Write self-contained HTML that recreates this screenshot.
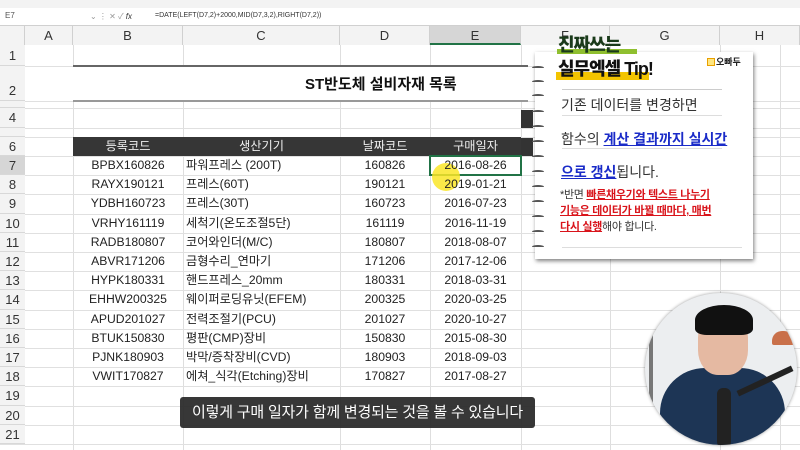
<!DOCTYPE html><html><head><meta charset="utf-8"><style>
*{margin:0;padding:0;box-sizing:border-box}
body{width:800px;height:450px;overflow:hidden;background:#fff;font-family:"Liberation Sans","Noto Sans CJK KR",sans-serif;position:relative;color:#222}
.a{position:absolute}
.vl{position:absolute;top:26px;bottom:0;width:1px;background:#dedede}
.hl{position:absolute;left:0;right:0;height:1px;background:#e0e0e0}
.rh{position:absolute;left:0;width:25px;background:#f3f3f3;font-size:13px;text-align:center;color:#333;border-bottom:1px solid #d8d8d8}
.ch{position:absolute;top:26px;height:19px;background:#f3f3f3;font-size:13px;text-align:center;line-height:19px;color:#333;border-right:1px solid #d0d0d0}
.c{position:absolute;font-size:12.2px;line-height:19px;white-space:nowrap;color:#222}
.ring{position:absolute;left:532px;width:12px;height:3px;border-top:2px solid #555;border-radius:50%}
</style></head><body>
<div class="a" style="left:0;top:0;width:800px;height:8px;background:#f3f3f3"></div>
<div class="a" style="left:0;top:8px;width:800px;height:18px;background:#fff;border-bottom:1px solid #d0d0d0"></div>
<div class="a" style="left:5px;top:11px;font-size:8px;color:#555">E7</div>
<div class="a" style="left:90px;top:11px;font-size:8px;color:#999">⌄ ⋮ ✕ ✓ <i style="color:#333">fx</i></div>
<div class="a" style="left:155px;top:12px;font-size:7px;color:#333">=DATE(LEFT(D7,2)+2000,MID(D7,3,2),RIGHT(D7,2))</div>
<div class="ch" style="left:0;width:25px"></div>
<div class="ch" style="left:25px;width:48px">A</div>
<div class="ch" style="left:73px;width:110px">B</div>
<div class="ch" style="left:183px;width:157px">C</div>
<div class="ch" style="left:340px;width:90px">D</div>
<div class="ch" style="left:430px;width:91px;background:#d6d6d6;border-bottom:2px solid #217346">E</div>
<div class="ch" style="left:521px;width:89px">F</div>
<div class="ch" style="left:610px;width:110px">G</div>
<div class="ch" style="left:720px;width:80px">H</div>
<div class="vl" style="left:73px;top:45px"></div><div class="vl" style="left:183px;top:45px"></div><div class="vl" style="left:340px;top:45px"></div><div class="vl" style="left:430px;top:45px"></div><div class="vl" style="left:521px;top:45px"></div><div class="vl" style="left:610px;top:45px"></div><div class="vl" style="left:720px;top:45px"></div><div class="vl" style="left:780px;top:45px"></div>
<div class="hl" style="top:66px"></div><div class="hl" style="top:101px"></div><div class="hl" style="top:108px"></div><div class="hl" style="top:128px"></div><div class="hl" style="top:137px"></div><div class="hl" style="top:156px"></div>
<div class="hl" style="top:175px"></div><div class="hl" style="top:194px"></div><div class="hl" style="top:214px"></div><div class="hl" style="top:233px"></div><div class="hl" style="top:252px"></div><div class="hl" style="top:271px"></div><div class="hl" style="top:290px"></div><div class="hl" style="top:310px"></div><div class="hl" style="top:329px"></div><div class="hl" style="top:348px"></div><div class="hl" style="top:367px"></div><div class="hl" style="top:386px"></div><div class="hl" style="top:406px"></div><div class="hl" style="top:425px"></div><div class="hl" style="top:444px"></div>
<div class="rh" style="top:45px;height:21px;line-height:21px">1</div>
<div class="rh" style="top:66px;height:35px;line-height:50px">2</div>
<div class="rh" style="top:101px;height:7px"></div>
<div class="rh" style="top:108px;height:20px;line-height:20px">4</div>
<div class="rh" style="top:128px;height:9px"></div>
<div class="rh" style="top:137px;height:19px;line-height:19px">6</div>
<div class="rh" style="top:156px;height:19px;line-height:19px;background:#d6d6d6">7</div>
<div class="rh" style="top:175px;height:19px;line-height:19px">8</div>
<div class="rh" style="top:194px;height:20px;line-height:20px">9</div>
<div class="rh" style="top:214px;height:19px;line-height:19px">10</div>
<div class="rh" style="top:233px;height:19px;line-height:19px">11</div>
<div class="rh" style="top:252px;height:19px;line-height:19px">12</div>
<div class="rh" style="top:271px;height:19px;line-height:19px">13</div>
<div class="rh" style="top:290px;height:20px;line-height:20px">14</div>
<div class="rh" style="top:310px;height:19px;line-height:19px">15</div>
<div class="rh" style="top:329px;height:19px;line-height:19px">16</div>
<div class="rh" style="top:348px;height:19px;line-height:19px">17</div>
<div class="rh" style="top:367px;height:19px;line-height:19px">18</div>
<div class="rh" style="top:386px;height:20px;line-height:20px">19</div>
<div class="rh" style="top:406px;height:19px;line-height:19px">20</div>
<div class="rh" style="top:425px;height:19px;line-height:19px">21</div>
<div class="a" style="left:73px;top:65px;width:455px;height:2px;background:#666"></div>
<div class="a" style="left:73px;top:100px;width:455px;height:2px;background:#999"></div>
<div class="a" style="left:73px;top:67px;width:455px;height:33px;background:#fff"></div>
<div class="a" style="left:305px;top:73px;font-size:15px;font-weight:bold;color:#111">ST반도체 설비자재 목록</div>
<div class="a" style="left:521px;top:110px;width:12px;height:18px;background:#333"></div>
<div class="a" style="left:521px;top:138px;width:12px;height:18px;background:#333"></div>
<div class="a" style="left:73px;top:137px;width:448px;height:19px;background:#363636"></div>
<div class="c" style="left:73px;top:137px;width:110px;text-align:center;color:#eee">등록코드</div>
<div class="c" style="left:183px;top:137px;width:157px;text-align:center;color:#eee">생산기기</div>
<div class="c" style="left:340px;top:137px;width:90px;text-align:center;color:#eee">날짜코드</div>
<div class="c" style="left:430px;top:137px;width:91px;text-align:center;color:#eee">구매일자</div>
<div class="a" style="left:429px;top:155px;width:93px;height:21px;border:2px solid #217346"></div>
<div class="a" style="left:432px;top:163px;width:28px;height:28px;border-radius:50%;background:rgba(250,230,40,.85)"></div>
<div class="c" style="left:73px;top:156px;width:110px;text-align:center">BPBX160826</div><div class="c" style="left:186px;top:156px">파워프레스 (200T)</div><div class="c" style="left:340px;top:156px;width:90px;text-align:center">160826</div><div class="c" style="left:430px;top:156px;width:91px;text-align:center">2016-08-26</div>
<div class="c" style="left:73px;top:175px;width:110px;text-align:center">RAYX190121</div><div class="c" style="left:186px;top:175px">프레스(60T)</div><div class="c" style="left:340px;top:175px;width:90px;text-align:center">190121</div><div class="c" style="left:430px;top:175px;width:91px;text-align:center">2019-01-21</div>
<div class="c" style="left:73px;top:194px;width:110px;text-align:center">YDBH160723</div><div class="c" style="left:186px;top:194px">프레스(30T)</div><div class="c" style="left:340px;top:194px;width:90px;text-align:center">160723</div><div class="c" style="left:430px;top:194px;width:91px;text-align:center">2016-07-23</div>
<div class="c" style="left:73px;top:214px;width:110px;text-align:center">VRHY161119</div><div class="c" style="left:186px;top:214px">세척기(온도조절5단)</div><div class="c" style="left:340px;top:214px;width:90px;text-align:center">161119</div><div class="c" style="left:430px;top:214px;width:91px;text-align:center">2016-11-19</div>
<div class="c" style="left:73px;top:233px;width:110px;text-align:center">RADB180807</div><div class="c" style="left:186px;top:233px">코어와인더(M/C)</div><div class="c" style="left:340px;top:233px;width:90px;text-align:center">180807</div><div class="c" style="left:430px;top:233px;width:91px;text-align:center">2018-08-07</div>
<div class="c" style="left:73px;top:252px;width:110px;text-align:center">ABVR171206</div><div class="c" style="left:186px;top:252px">금형수리_연마기</div><div class="c" style="left:340px;top:252px;width:90px;text-align:center">171206</div><div class="c" style="left:430px;top:252px;width:91px;text-align:center">2017-12-06</div>
<div class="c" style="left:73px;top:271px;width:110px;text-align:center">HYPK180331</div><div class="c" style="left:186px;top:271px">핸드프레스_20mm</div><div class="c" style="left:340px;top:271px;width:90px;text-align:center">180331</div><div class="c" style="left:430px;top:271px;width:91px;text-align:center">2018-03-31</div>
<div class="c" style="left:73px;top:290px;width:110px;text-align:center">EHHW200325</div><div class="c" style="left:186px;top:290px">웨이퍼로딩유닛(EFEM)</div><div class="c" style="left:340px;top:290px;width:90px;text-align:center">200325</div><div class="c" style="left:430px;top:290px;width:91px;text-align:center">2020-03-25</div>
<div class="c" style="left:73px;top:310px;width:110px;text-align:center">APUD201027</div><div class="c" style="left:186px;top:310px">전력조절기(PCU)</div><div class="c" style="left:340px;top:310px;width:90px;text-align:center">201027</div><div class="c" style="left:430px;top:310px;width:91px;text-align:center">2020-10-27</div>
<div class="c" style="left:73px;top:329px;width:110px;text-align:center">BTUK150830</div><div class="c" style="left:186px;top:329px">평판(CMP)장비</div><div class="c" style="left:340px;top:329px;width:90px;text-align:center">150830</div><div class="c" style="left:430px;top:329px;width:91px;text-align:center">2015-08-30</div>
<div class="c" style="left:73px;top:348px;width:110px;text-align:center">PJNK180903</div><div class="c" style="left:186px;top:348px">박막/증착장비(CVD)</div><div class="c" style="left:340px;top:348px;width:90px;text-align:center">180903</div><div class="c" style="left:430px;top:348px;width:91px;text-align:center">2018-09-03</div>
<div class="c" style="left:73px;top:367px;width:110px;text-align:center">VWIT170827</div><div class="c" style="left:186px;top:367px">에쳐_식각(Etching)장비</div><div class="c" style="left:340px;top:367px;width:90px;text-align:center">170827</div><div class="c" style="left:430px;top:367px;width:91px;text-align:center">2017-08-27</div>
<!-- tip card -->
<div class="a" style="left:535px;top:52px;width:218px;height:207px;background:#fff;box-shadow:1px 2px 4px rgba(0,0,0,.5)"></div>
<div class="ring" style="top:66px"></div><div class="ring" style="top:80px"></div><div class="ring" style="top:94px"></div><div class="ring" style="top:110px"></div><div class="ring" style="top:125px"></div><div class="ring" style="top:140px"></div><div class="ring" style="top:155px"></div><div class="ring" style="top:170px"></div><div class="ring" style="top:185px"></div><div class="ring" style="top:200px"></div><div class="ring" style="top:215px"></div><div class="ring" style="top:230px"></div><div class="ring" style="top:245px"></div>
<div class="a" style="left:557px;top:49px;width:80px;height:5px;background:#8fbf2f"></div>
<div class="a" style="left:558px;top:34px;font-size:18px;font-weight:900;color:#1a3a1a;line-height:22px;letter-spacing:-1px">진짜쓰는</div>
<div class="a" style="left:556px;top:72px;width:93px;height:8px;background:#f3c400"></div>
<div class="a" style="left:558px;top:58px;font-size:18px;font-weight:900;color:#111;line-height:22px;letter-spacing:-1px">실무엑셀 Tip!</div>
<div class="a" style="left:707px;top:58px;width:8px;height:8px;border:1px solid #e9a000;background:#ffe680"></div>
<div class="a" style="left:716px;top:55px;font-size:9px;font-weight:bold;color:#222">오빠두</div>
<div class="a" style="left:562px;top:89px;width:160px;height:1px;background:#ccc"></div>
<div class="a" style="left:562px;top:115px;width:160px;height:1px;background:#ddd"></div>
<div class="a" style="left:562px;top:148px;width:160px;height:1px;background:#ddd"></div>
<div class="a" style="left:562px;top:247px;width:180px;height:1px;background:#ddd"></div>
<div class="a" style="left:561px;top:95px;font-size:14px;color:#333">기존 데이터를 변경하면</div>
<div class="a" style="left:561px;top:129px;font-size:14px;color:#333;white-space:nowrap">함수의 <b style="color:#1a2bc8;text-decoration:underline">계산 결과까지 실시간</b></div>
<div class="a" style="left:561px;top:162px;font-size:14px;color:#333"><b style="color:#1a2bc8;text-decoration:underline">으로 갱신</b>됩니다.</div>
<div class="a" style="left:560px;top:187px;width:195px;font-size:11px;line-height:16px;color:#333;white-space:nowrap;letter-spacing:-0.3px">*반면 <b style="color:#d9141b;text-decoration:underline">빠른채우기와 텍스트 나누기</b><br><b style="color:#d9141b;text-decoration:underline">기능은 데이터가 바뀔 때마다, 매번</b><br><b style="color:#d9141b;text-decoration:underline">다시 실행</b>해야 합니다.</div>
<!-- subtitle -->
<div class="a" style="left:180px;top:397px;width:355px;height:31px;background:rgba(40,40,40,.93);border-radius:3px;color:#fff;font-size:15px;line-height:31px;text-align:center;white-space:nowrap;letter-spacing:-0.2px">이렇게 구매 일자가 함께 변경되는 것을 볼 수 있습니다</div>
<!-- webcam -->
<div class="a" style="left:645px;top:293px;width:152px;height:152px;border-radius:50%;overflow:hidden;background:#eceef0;box-shadow:0 0 3px rgba(0,0,0,.4)">
<div class="a" style="left:4px;top:40px;width:4px;height:80px;background:#777"></div>
<div class="a" style="left:127px;top:38px;width:22px;height:14px;border-radius:10px 10px 2px 2px;background:#c9704a"></div>
<div class="a" style="left:15px;top:75px;width:125px;height:100px;border-radius:45px 45px 0 0;background:#1d3555"></div>
<div class="a" style="left:53px;top:20px;width:50px;height:62px;border-radius:40%;background:#e5b9a2"></div>
<div class="a" style="left:50px;top:12px;width:58px;height:30px;border-radius:50% 50% 20% 20%;background:#111"></div>
<div class="a" style="left:72px;top:95px;width:14px;height:60px;background:#222;border-radius:6px"></div>
<div class="a" style="left:90px;top:85px;width:60px;height:6px;background:#222;transform:rotate(-25deg)"></div>
</div>
</body></html>
